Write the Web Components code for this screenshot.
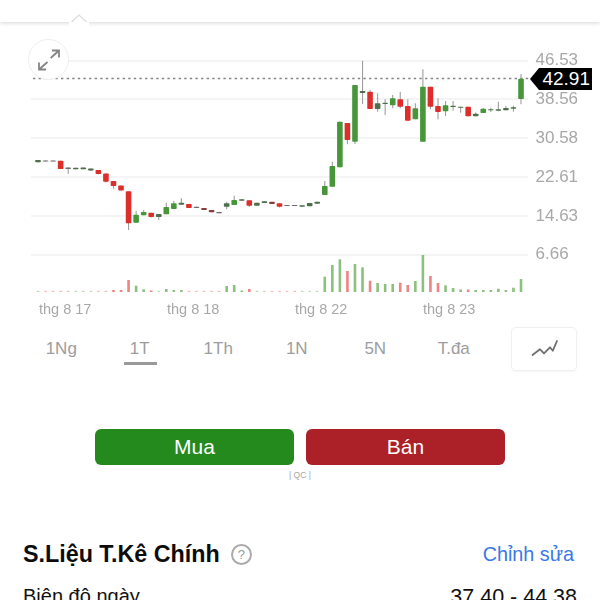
<!DOCTYPE html>
<html lang="vi">
<head>
<meta charset="UTF-8">
<title>Biểu đồ</title>
<style>
    html, body { margin: 0; height: 600px; overflow: hidden; background: #fff; }
    body { font-family: "Liberation Sans", Arial, sans-serif; display: flex; flex-direction: column; }
    body > * { flex: none; }
</style>
</head>
<body>
<top-bar></top-bar>
<candle-chart></candle-chart>
<range-tabs active="1T">
    <span>1Ng</span><span>1T</span><span>1Th</span><span>1N</span><span>5N</span><span>T.đa</span>
</range-tabs>
<trade-buttons></trade-buttons>
<stats-panel></stats-panel>

<script>
class TopBar extends HTMLElement {
    constructor() {
        super();
        this.attachShadow({ mode: 'open' });
        this.shadowRoot.innerHTML = `
            <style>
                :host { display: block; height: 22px; position: relative; z-index: 1; background: #fff;
                        box-shadow: 0 1px 4px rgba(0,0,0,.17); }
                svg { position: absolute; left: 69px; top: 13px; filter: blur(.5px); }
            </style>
            <svg width="20" height="14" viewBox="0 0 20 14">
                <path d="M0 9 H2.5 L10 2 L17.5 9 H20 V14 H0Z" fill="#fff"/>
                <path d="M2.5 9 L10 2 L17.5 9" fill="none" stroke="#dcdcdc" stroke-width="1.2"/>
            </svg>
        `;
    }
}

// i = candle index, all values are pixels inside the chart box
// [top, bottom, wickTop, wickBottom, colour]  g green, r red, d dark green, k dark red, n grey
const CANDLES = [
    [160,162.3,160,162.3,'d'],[160.5,161.5,160.5,161.5,'n'],[160.6,161.6,160.6,161.6,'n'],[160.7,169,160.7,169,'r'],
    [167.5,169,167.5,174,'n'],[167.8,169.2,167.8,169.2,'d'],[167.5,169.2,167.5,169.2,'d'],[168.5,170.5,168.5,171,'d'],
    [170,174,170,174.5,'r'],[173.5,181.7,173.5,182.5,'r'],[181,186,181,188.7,'r'],[185.5,190.5,185.5,190.5,'r'],
    [191.3,223.3,191.3,230,'r'],[214.7,222.7,210.7,222.7,'g'],[212,215.3,210,215.3,'g'],[212.7,217,212.7,217.5,'r'],
    [214,217,214,220,'d'],[207,214.3,202.7,214.3,'g'],[203.3,209,201,209,'g'],[202.7,204.7,198.3,204.7,'d'],
    [204,208,204,208,'r'],[206.7,208,206.7,208,'n'],[208,210,208,210,'k'],[210,212.3,210,212.3,'k'],
    [212,213.3,212,213.3,'n'],[203.3,206.7,201.7,209.3,'d'],[200,205,195.7,205,'g'],[199.3,200.7,199.3,200.7,'d'],
    [200.3,205.7,200.3,207,'r'],[202.7,205.7,202.7,205.7,'d'],[201.3,203,201.3,203,'d'],[201.7,204,201.7,204,'k'],
    [203.3,206.7,203.3,207.5,'r'],[205,206,205,206,'n'],[205,206,205,206,'n'],[205.3,206.7,205.3,206.7,'d'],
    [203,206.3,203,206.3,'d'],[201.7,203.7,201.7,203.7,'d'],[186,195,181,195,'g'],[166,186.7,161.7,186.7,'g'],
    [121.7,167.3,121.7,167.3,'g'],[123,140,123,144.3,'r'],[85,141.7,85,144,'g'],[91,93,60.7,104,'d'],
    [91.7,109,90,109,'r'],[103.3,109,93.3,111.7,'d'],[102.7,104,99.3,115,'d'],[98.3,105.3,95,108.3,'g'],
    [99.3,106.7,91.7,108.3,'r'],[106,120.7,99.3,120.7,'r'],[108.3,119.3,103.3,119.3,'g'],[86.7,141.7,69.3,141.7,'g'],
    [86.7,106.7,86.7,109.3,'r'],[106,112,98.3,119.3,'r'],[105.3,111.3,101,116,'g'],[105.7,107,101,110.7,'d'],
    [106.7,107.7,106.7,112.7,'d'],[106.7,116.3,106.7,116.3,'r'],[113.7,116.3,112.5,116.3,'d'],[108.7,113,108,113,'g'],
    [109.2,110.2,107.7,112,'d'],[109.3,110.7,101.7,111.3,'d'],[108,110.3,106,110.3,'d'],[107.3,108.7,105.7,111.7,'d'],
    [78.7,99,74,104.3,'g']
];
const BODY = { g: '#47973a', r: '#dc2f2b', d: '#4e6f4c', k: '#8a3b3c', n: '#6d6d6d' };
const WICK = '#9e9e9e';

// volume bar tops, bottom of every bar is y=292
const VOL_TOPS = { 10: 290, 11: 290, 12: 280, 13: 285.7, 14: 289.3, 15: 290.5, 17: 289, 18: 290, 19: 290,
    25: 286, 26: 285, 27: 290.5, 28: 289, 38: 276.7, 39: 265, 40: 259.3, 41: 271, 42: 264, 43: 267.3, 44: 280.7,
    45: 283, 46: 284, 47: 284, 48: 282.7, 49: 285, 50: 281, 51: 255, 52: 276, 53: 283, 54: 285.3, 55: 288,
    56: 289.5, 57: 289.5, 58: 290, 59: 290, 60: 290, 61: 288.7, 62: 290, 63: 287.7, 64: 279 };

class CandleChart extends HTMLElement {
    constructor() {
        super();
        this.attachShadow({ mode: 'open' });
        const xAt = i => 38 + i * 7.547;

        const grid = [61, 99, 138, 177, 216, 255].map(y =>
            `<line x1="31" x2="528" y1="${y}" y2="${y}" stroke="#e9e9e9" stroke-width="1.2"/>`).join('');

        const prices = [['46.53', 65], ['38.56', 104], ['30.58', 143], ['22.61', 182], ['14.63', 221], ['6.66', 259]]
            .map(([t, y]) => `<text class="axis" x="535.5" y="${y}">${t}</text>`).join('');

        const dates = [['thg 8 17', 39], ['thg 8 18', 167], ['thg 8 22', 295], ['thg 8 23', 423]]
            .map(([t, x]) => `<text class="date" x="${x}" y="314">${t}</text>`).join('');

        let candles = '', volumes = '';
        CANDLES.forEach(([top, bottom, wickTop, wickBottom, c], i) => {
            const x = xAt(i);
            const h = Math.max(bottom - top, 1);
            candles += `<line x1="${x}" x2="${x}" y1="${wickTop}" y2="${wickBottom}" stroke="${WICK}" stroke-width="1.1"/>`;
            candles += `<rect x="${x - 2.8}" y="${top}" width="5.6" height="${h}" rx=".8" fill="${BODY[c]}"/>`;
            const up = c === 'g' || c === 'd';
            const volTop = VOL_TOPS[i] || 290.8;
            const small = !VOL_TOPS[i];
            volumes += `<rect x="${x - 1.3}" y="${volTop}" width="2.6" height="${292 - volTop}"
                fill="${up ? '#8cc07e' : '#ee8582'}" opacity="${small ? .55 : 1}"/>`;
        });

        this.shadowRoot.innerHTML = `
            <style>
                :host { display: block; height: 298px; position: relative; }
                svg.plot { position: absolute; left: 0; top: -22px; }
                .marks { filter: blur(.45px); }
                .axis { font: 17px "Liberation Sans", Arial, sans-serif; fill: #a8a8a8; }
                .date { font: 14.5px "Liberation Sans", Arial, sans-serif; fill: #a8a8a8; }
                .expand {
                    position: absolute; left: 28px; top: 17px; width: 41px; height: 41px;
                    box-sizing: border-box; border-radius: 50%; border: 1px solid #ededed; background: #fff;
                    display: flex; align-items: center; justify-content: center;
                }
                .tag {
                    position: absolute; left: 530px; top: 46px; height: 22px; width: 62px;
                    display: flex; align-items: center; justify-content: flex-end; box-sizing: border-box;
                    padding-right: 2px; background: #000; color: #fff; font-size: 19px;
                    clip-path: polygon(0 50%, 9px 0, 100% 0, 100% 100%, 9px 100%);
                }
            </style>
            <svg class="plot" width="600" height="320" viewBox="0 0 600 320">
                <g class="marks">
                    ${grid}
                    <line x1="33" x2="530" y1="78.5" y2="78.5" stroke="#858585" stroke-width="1.5" stroke-dasharray="2.4 3.2"/>
                    ${volumes}
                    ${candles}
                </g>
                ${prices}
                ${dates}
            </svg>
            <div class="expand">
                <svg width="24" height="24" viewBox="0 0 24 24" fill="none" stroke="#858585" stroke-width="1.8">
                    <path d="M15 2.5 H22 V9.5 M22 2.5 L13.7 10"/>
                    <path d="M2 14.5 V21.5 H9 M2 21.5 L10.5 14"/>
                </svg>
            </div>
            <div class="tag">42.91</div>
        `;
    }
}

class RangeTabs extends HTMLElement {
    constructor() {
        super();
        this.attachShadow({ mode: 'open' });
        this.shadowRoot.innerHTML = `
            <style>
                :host { display: flex; height: 44px; padding: 7px 23px 0 22px; align-items: stretch; }
                .tabs { flex: 1; display: flex; }
                ::slotted(span) {
                    width: 78.5px; text-align: center; font-size: 17px; line-height: 44px; color: #9d9d9d;
                    position: relative;
                }
                ::slotted(span.on)::after {
                    content: ''; position: absolute; left: 23px; top: 35px; width: 33px; height: 3px; background: #9a9a9a;
                }
                .type {
                    width: 66px; height: 44px; box-sizing: border-box; border: 1px solid #f0f0f0; border-radius: 5px;
                    display: flex; align-items: center; justify-content: center;
                    box-shadow: 0 1px 2px rgba(0,0,0,.04);
                }
            </style>
            <div class="tabs"><slot></slot></div>
            <div class="type">
                <svg width="30" height="20" viewBox="0 0 30 20" fill="none" stroke="#6f6f6f" stroke-width="1.8" stroke-linejoin="round" stroke-linecap="round">
                    <path d="M3.5 16 L11 10.3 L15 14.3 L21 8.3 L23.8 11.7 L28 2"/>
                </svg>
            </div>
        `;
    }
    connectedCallback() {
        const active = this.getAttribute('active');
        this.querySelectorAll('span').forEach(s => {
            if (s.textContent === active) s.classList.add('on');
        });
    }
}

class TradeButtons extends HTMLElement {
    constructor() {
        super();
        this.attachShadow({ mode: 'open' });
        this.shadowRoot.innerHTML = `
            <style>
                :host { display: block; padding-top: 58px; }
                .row { display: flex; justify-content: center; gap: 12px; }
                .btn {
                    width: 199px; height: 36px; border-radius: 6px; color: #fff; font-size: 21px;
                    display: flex; align-items: center; justify-content: center;
                }
                .buy { background: #258a1e; }
                .sell { background: #ac2027; }
                .ad { text-align: center; font-size: 8.5px; line-height: 10px; margin-top: 5px; color: #a5a5a5; }
            </style>
            <div class="row">
                <div class="btn buy">Mua</div>
                <div class="btn sell">Bán</div>
            </div>
            <div class="ad">| QC |</div>
        `;
    }
}

class StatsPanel extends HTMLElement {
    constructor() {
        super();
        this.attachShadow({ mode: 'open' });
        this.shadowRoot.innerHTML = `
            <style>
                :host { display: block; padding: 58px 23px 0; color: #111; }
                .head { display: flex; align-items: center; height: 32px; }
                h2 { margin: 0; font-size: 23.3px; font-weight: 700; color: #0c0c0c; }
                .help {
                    width: 17px; height: 17px; margin-left: 11px; border: 2px solid #aaa; border-radius: 50%;
                    color: #999; font-size: 13px; display: flex; align-items: center; justify-content: center;
                }
                .edit { margin-left: auto; margin-right: 3px; color: #3a78e6; font-size: 19.8px; }
                .row { display: flex; justify-content: space-between; font-size: 20px; margin-top: 15px; }
                .row span + span { font-size: 21.5px; }
            </style>
            <div class="head">
                <h2>S.Liệu T.Kê Chính</h2>
                <span class="help">?</span>
                <span class="edit">Chỉnh sửa</span>
            </div>
            <div class="row"><span>Biên độ ngày</span><span>37.40 - 44.38</span></div>
        `;
    }
}

customElements.define('top-bar', TopBar);
customElements.define('candle-chart', CandleChart);
customElements.define('range-tabs', RangeTabs);
customElements.define('trade-buttons', TradeButtons);
customElements.define('stats-panel', StatsPanel);
</script>
</body>
</html>
